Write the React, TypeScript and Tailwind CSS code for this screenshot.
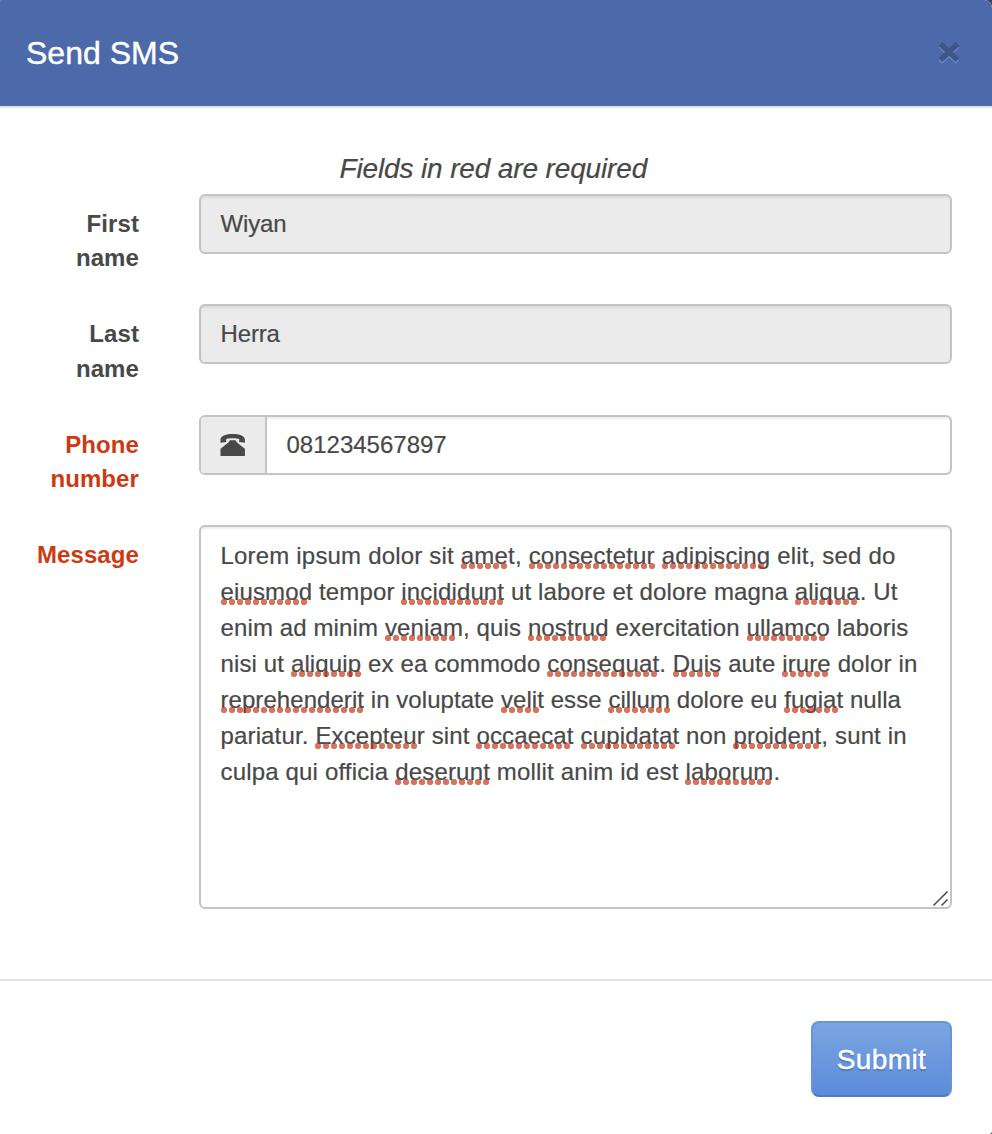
import type { ReactNode } from "react";

function Misspelled({ children, dots }: { children: ReactNode; dots: number }) {
  return (
    <span className="relative">
      {children}
      <span
        aria-hidden="true"
        className="absolute left-0 top-[21px] h-[6px] bg-[radial-gradient(circle_at_3px_3px,rgba(201,55,25,0.7)_2.8px,transparent_3.5px)] bg-[length:8px_6px] bg-repeat-x"
        style={{ width: dots * 8 }}
      />
    </span>
  );
}

const M = Misspelled;

function Label({ required, children }: { required?: boolean; children: ReactNode }) {
  return (
    <div className={`w-[139px] shrink-0 pt-[13px] text-right text-[24px] font-bold leading-[34.3px] tracking-[0.1px] [-webkit-text-stroke:0] ${required ? "text-[#cb3b13]" : "text-[#484848]"}`}>
      {children}
    </div>
  );
}

function ReadOnly({ value }: { value: string }) {
  return (
    <div className="flex h-[60px] w-[753px] items-center rounded-[6px] border-2 border-[#c4c4c4] bg-[#ebebeb] pl-[19.5px] pt-[0.2px] text-[24px] tracking-[-0.15px] shadow-[inset_0_2px_2px_rgba(0,0,0,0.07)]">
      {value}
    </div>
  );
}

export default function App() {
  return (
    <div className="h-[1134px] w-[992px] overflow-hidden bg-[#33465c] font-['Liberation_Sans',Arial,sans-serif] text-[#484848] [-webkit-text-stroke:0.2px]">
      <div className="flex h-full flex-col rounded-tr-[8px] rounded-tl-[2px] rounded-br-[3px] overflow-hidden bg-white">
        <header className="flex h-[108px] shrink-0 items-center justify-between border-b-2 border-[#e1e1e1] bg-[#4c6aaa] pl-[26px] pr-[32px]">
          <h1 className="text-[32px] leading-[40px] text-white [-webkit-text-stroke:0.4px]">Send SMS</h1>
          <svg width="22" height="24" viewBox="0 0 22 24" aria-label="Close">
            <path d="M2.5 5 19.5 21M19.5 5 2.5 21" stroke="#718ac0" strokeWidth="5" />
            <path d="M2.5 3 19.5 19M19.5 3 2.5 19" stroke="#3d5588" strokeWidth="5.300" />
          </svg>
        </header>
        <main className="flex h-[871px] shrink-0 flex-col pt-[41px]">
          <p className="h-[45px] pl-[339.5px] text-[28px] italic leading-[40px] tracking-[-0.14px]">Fields in red are required</p>
          <div className="flex h-[110.4px] gap-[60px]">
            <Label>First<br />name</Label>
            <ReadOnly value="Wiyan" />
          </div>
          <div className="flex h-[110.6px] gap-[60px]">
            <Label>Last<br />name</Label>
            <ReadOnly value="Herra" />
          </div>
          <div className="flex h-[110px] gap-[60px]">
            <Label required>Phone<br />number</Label>
            <div className="flex h-[60px] w-[753px] overflow-hidden rounded-[6px] border-2 border-[#c4c4c4]">
              <div className="flex w-[66px] items-center justify-center border-r-2 border-[#c4c4c4] bg-[#ebebeb] pt-[1px]">
                <svg width="26" height="24" viewBox="0 0 26 24" fill="#484848">
                  <path d="M.5 9.800V6.200C1.200 2.900 6 1 12.700 1s11.500 1.900 12.200 5.200v3.600l-5.700-.8V5.900C17.200 4.900 8.200 4.900 6.200 5.900V9z" />
                  <path d="M10 7.200h5.500l1.500 2.300 7.900 6.200V23H.5v-7.300l7.900-6.200z" />
                </svg>
              </div>
              <div className="flex flex-1 items-center pl-[19.5px] text-[24px] shadow-[inset_0_2px_2px_rgba(0,0,0,0.07)]">081234567897</div>
            </div>
          </div>
          <div className="flex gap-[60px]">
            <Label required>Message</Label>
            <div className="relative h-[384px] w-[753px] rounded-[6px] border-2 border-[#c4c4c4] pt-[11px] pl-[19.5px] text-[24px] leading-[36px] whitespace-nowrap shadow-[inset_0_2px_2px_rgba(0,0,0,0.07)]">
              <div className="tracking-[0.19px]">Lorem ipsum dolor sit <M dots={6}>amet</M>, <M dots={16}>consectetur</M> <M dots={13}>adipiscing</M> elit, sed do</div>
              <div className="tracking-[0.14px]"><M dots={11}>eiusmod</M> tempor <M dots={13}>incididunt</M> ut labore et dolore magna <M dots={8}>aliqua</M>. Ut</div>
              <div className="tracking-[0.12px]">enim ad minim <M dots={9}>veniam</M>, quis <M dots={10}>nostrud</M> exercitation <M dots={10}>ullamco</M> laboris</div>
              <div className="tracking-[0.13px]">nisi ut <M dots={9}>aliquip</M> ex ea commodo <M dots={14}>consequat</M>. <M dots={6}>Duis</M> aute <M dots={6}>irure</M> dolor in</div>
              <div className="tracking-[0.06px]"><M dots={18}>reprehenderit</M> in voluptate <M dots={5}>velit</M> esse <M dots={8}>cillum</M> dolore eu <M dots={7}>fugiat</M> nulla</div>
              <div className="tracking-[0.15px]">pariatur. <M dots={13}>Excepteur</M> sint <M dots={12}>occaecat</M> <M dots={12}>cupidatat</M> non <M dots={11}>proident</M>, sunt in</div>
              <div className="tracking-[0.17px]">culpa qui officia <M dots={12}>deserunt</M> mollit anim id est <M dots={11}>laborum</M>.</div>
              <svg className="absolute right-[1px] bottom-0" width="17" height="17" viewBox="0 0 17 17" stroke="#4a4a4a" strokeWidth="1.5" fill="none">
                <path d="M1.500 15.500 15.500 1.500M9.500 15.500 15.500 9.500" />
              </svg>
            </div>
          </div>
        </main>
        <footer className="flex flex-1 justify-end border-t-2 border-[#e1e1e1] pt-[40px] pr-[40px]">
          <button className="h-[76px] w-[141px] rounded-[8px] border-2 border-[#6593dc] border-b-[#4d7bc5] bg-linear-to-b from-[#7ba5e2] to-[#5c8bd9] pt-[2px] text-[28px] tracking-[0.4px] text-white [-webkit-text-stroke:0.4px] [text-shadow:0_2px_1px_rgba(0,0,0,0.2)]">Submit</button>
        </footer>
      </div>
    </div>
  );
}
